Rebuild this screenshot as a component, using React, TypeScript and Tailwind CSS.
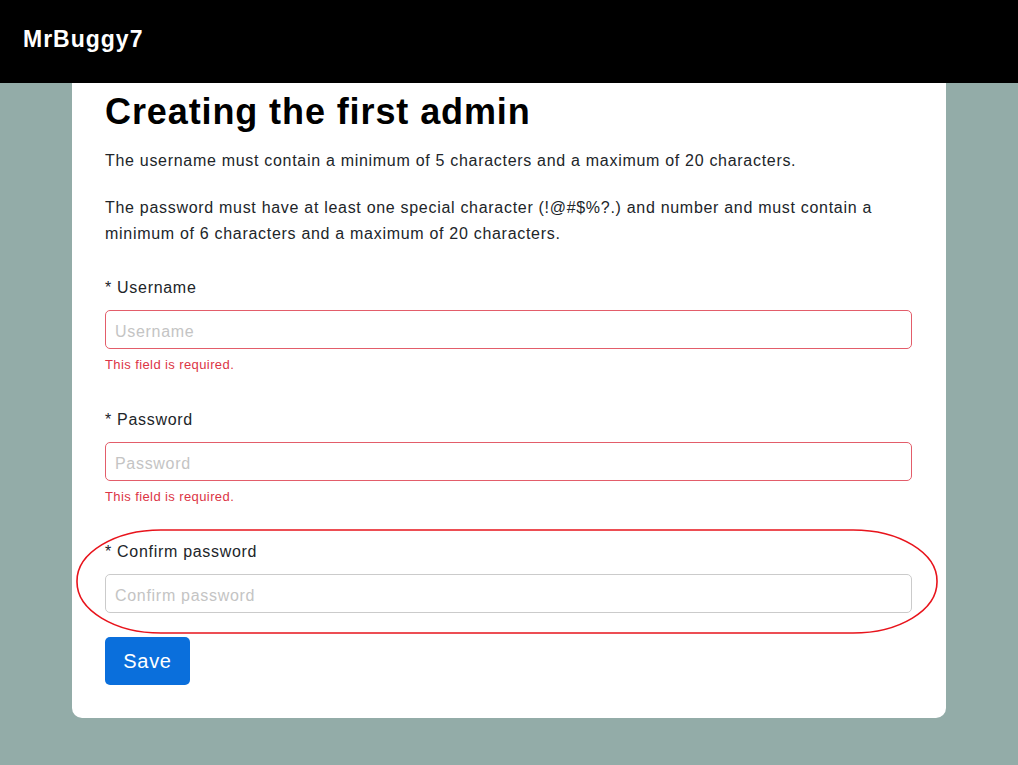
const font = { fontFamily: '"Liberation Sans", Arial, sans-serif' };

const Field = ({ label, placeholder, error, type = "text" }: { label: string; placeholder: string; error?: boolean; type?: string }) => (
  <div className="flex flex-col">
    <label className="text-[16px] leading-[24px] tracking-[0.7px] text-[#212529]">* {label}</label>
    <input
      type={type}
      placeholder={placeholder}
      className={
        error
          ? "mt-[10px] h-[39px] w-full rounded-[5px] border border-[#e35d6a] bg-white pl-[9px] pt-[4px] text-[16px] tracking-[0.7px] text-[#212529] outline-none placeholder:text-[#c4c4c4]"
          : "mt-[10px] h-[39px] w-full rounded-[5px] border border-[#cbcbcb] bg-white pl-[9px] pt-[4px] text-[16px] tracking-[0.7px] text-[#212529] outline-none placeholder:text-[#c4c4c4]"
      }
    />
    {error && (
      <div className="mt-[6px] text-[13px] leading-[20px] tracking-[0.4px] text-[#dc3545]">This field is required.</div>
    )}
  </div>
);

export default function App() {
  return (
    <div className="relative min-h-screen bg-[#93aca8]" style={font}>
      <header className="h-[83px] bg-black pl-[23px] pt-[26px]">
        <span className="text-[23px] font-bold leading-[27px] tracking-[1px] text-white">MrBuggy7</span>
      </header>

      <main className="mx-auto w-[874px] rounded-b-[10px] bg-white pb-[33px] pl-[33px] pr-[34px] pt-[7px]">
        <h1 className="text-[36px] font-bold leading-[43px] tracking-[0.9px] text-black">Creating the first admin</h1>
        <p className="mt-[15px] text-[16px] leading-[26px] tracking-[0.7px] text-[#212529]">
          The username must contain a minimum of 5 characters and a maximum of 20 characters.
        </p>
        <p className="mt-[21px] text-[16px] leading-[26px] tracking-[0.7px] text-[#212529]">
          The password must have at least one special character (!@#$%?.) and number and must contain a minimum of 6
          characters and a maximum of 20 characters.
        </p>

        <form className="mt-[29px] flex flex-col gap-[33px]" onSubmit={(e) => e.preventDefault()}>
          <Field label="Username" placeholder="Username" error />
          <Field label="Password" placeholder="Password" type="password" error />
          <div className="flex flex-col">
            <Field label="Confirm password" placeholder="Confirm password" type="password" />
            <button
              type="submit"
              className="mt-[24px] h-[48px] w-[85px] rounded-[5px] bg-[#0a6fdc] text-[20px] tracking-[0.7px] text-white"
            >
              Save
            </button>
          </div>
        </form>
      </main>

      {/* annotation around the confirm field */}
      <svg className="pointer-events-none absolute left-[76px] top-[529px]" width="863" height="106" viewBox="0 0 863 106">
        <rect x="1" y="1" width="860" height="103" rx="84" ry="51" fill="none" stroke="#e8141c" strokeWidth="1.6" />
      </svg>
    </div>
  );
}
